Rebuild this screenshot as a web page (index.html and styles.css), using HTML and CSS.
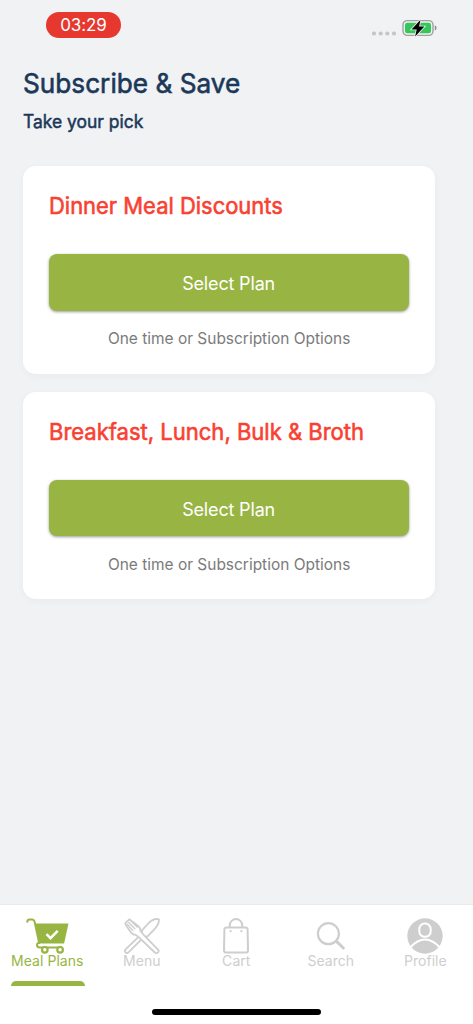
FILE: index.html
```html
<!DOCTYPE html>
<html lang="en">
<head>
<meta charset="utf-8">
<title>Subscribe &amp; Save</title>
<link rel="stylesheet" href="styles.css">
</head>
<body>
<div class="screen">
  <header class="status">
    <span class="clock">03:29</span>
    <span class="indicators">
      <svg class="signal" width="24" height="5" viewBox="0 0 24 5" fill="#c5c5c7"><circle cx="2" cy="2.5" r="2.1"/><circle cx="8.7" cy="2.5" r="2.1"/><circle cx="15.3" cy="2.5" r="2.1"/><circle cx="22" cy="2.5" r="2.1"/></svg>
      <svg class="battery" width="36" height="20" viewBox="0 0 36 20">
        <rect x="1" y="2.6" width="30" height="14.8" rx="4.3" fill="#f0f2f4" stroke="#a0a0a2" stroke-width="1.4"/>
        <rect x="3" y="4.7" width="26" height="10.6" rx="2.3" fill="#34c759"/>
        <path d="M32.8 7.3v5.1q1.8-.7 1.8-2.5t-1.8-2.6z" fill="#8c8c8e"/>
        <path d="M18.5 1.8 9.5 11.4h5.2l-1.6 7 9.3-9.9h-5.3z" fill="#000" stroke="#f0f2f4" stroke-width="1.6" paint-order="stroke"/>
      </svg>
    </span>
  </header>
  <main class="content">
    <h1 class="title">Subscribe &amp; Save</h1>
    <p class="subtitle">Take your pick</p>
    <section class="card">
      <h2 class="card-title dinner">Dinner Meal Discounts</h2>
      <button class="select">Select Plan</button>
      <p class="note">One time or Subscription Options</p>
    </section>
    <section class="card">
      <h2 class="card-title breakfast">Breakfast, Lunch, Bulk &amp; Broth</h2>
      <button class="select">Select Plan</button>
      <p class="note">One time or Subscription Options</p>
    </section>
  </main>
  <footer class="bottom">
    <nav class="tabs">
      <a class="tab active">
        <svg class="icon" width="46" height="36" viewBox="0 0 46 36" fill="none" stroke="#98b543" stroke-linecap="round" stroke-linejoin="round">
          <path d="M3.3 3.8Q3.5 1.6 5.5 1.6h2.3q2.2 0 2.8 2.2L15.2 25" stroke-width="2"/>
          <path d="M11.3 5.5h33.2l-4.4 20.1H15.6z" fill="#98b543" stroke="none"/>
          <path d="M15.5 24.5q-2.5.5-2.5 2.6 0 2.4 2.7 2.4h21.5" stroke-width="2"/>
          <circle cx="20.8" cy="31.8" r="2.8" fill="#fff" stroke-width="2.2"/>
          <circle cx="36.1" cy="31.8" r="2.8" fill="#fff" stroke-width="2.2"/>
          <path d="m22.5 16.2 4 4 7.2-7.4" stroke="#fff" stroke-width="2.5" stroke-linecap="butt" stroke-linejoin="miter"/>
        </svg>
        <span class="label">Meal Plans</span>
      </a>
      <a class="tab">
        <svg class="icon" width="36" height="36" viewBox="0 0 36 36" fill="#fff" stroke="#cecece" stroke-width="1.8" stroke-linecap="round" stroke-linejoin="round">
          <path d="M34.9 1.3C31 .2 27.7 2 24.7 5L18 12.3l-.4 3.5L1.6 31.4a2 2 0 0 0 2.9 3L20 18.8l3.5-.5 6.6-6.7c3-3 5.1-6.4 4.8-10.3z"/>
          <path d="M5.3 1.3 1.6 4.8c-.7 1 .1 2 .7 3l5 7.1c1.4 1.8 3.1 2.1 4.8 2.2l3.4 2.8 15.3 14.6a2.1 2.1 0 0 0 3.2-2.9L19.2 16.3 16.5 13c0-1.8-.4-3.5-2.1-4.8z"/>
          <path d="m7.5 3.2 5.6 5.8M4.8 4.4l6 6.3M3.3 6.2l5.5 6.4" fill="none" stroke-width="1.4"/>
        </svg>
        <span class="label">Menu</span>
      </a>
      <a class="tab">
        <svg class="icon" width="28" height="36" viewBox="0 0 28 36" fill="none" stroke="#cecece" stroke-width="2" stroke-linejoin="round">
          <path d="M4.4 9.5h19.2q1.9 0 2 2l.4 20.9q0 2.1-2.1 2.1H4.1q-2.1 0-2.1-2.1l.4-20.9q.1-2 2-2zM7.8 9.5V7.3a6.2 6.2 0 0 1 12.4 0v2.2"/>
          <g fill="#cecece" stroke="none"><circle cx="8.6" cy="13.2" r="1.1"/><circle cx="19.4" cy="13.2" r="1.1"/></g>
        </svg>
        <span class="label">Cart</span>
      </a>
      <a class="tab">
        <svg class="icon" width="30" height="36" viewBox="0 0 30 36" fill="none" stroke="#cecece">
          <circle cx="12.4" cy="15.7" r="10.5" stroke-width="2.2"/><path d="m19.9 23 2 2" stroke-width="2.2"/><path d="m21.3 24.2 6 5.8" stroke-width="3.1" stroke-linecap="round"/>
        </svg>
        <span class="label">Search</span>
      </a>
      <a class="tab">
        <svg class="icon" width="36" height="36" viewBox="0 0 36 36">
          <circle cx="18" cy="18" r="17.7" fill="#cecece"/>
          <rect x="12.3" y="5.6" width="11.4" height="13.2" rx="5.4" fill="none" stroke="#fff" stroke-width="2"/>
          <path d="M3.2 29.4Q18 13.6 32.8 29.4" fill="none" stroke="#fff" stroke-width="2.2"/>
        </svg>
        <span class="label">Profile</span>
      </a>
    </nav>
    <div class="marker"></div>
    <div class="home"></div>
  </footer>
</div>
</body>
</html>
```
FILE: styles.css
```css
* { box-sizing: border-box; }
body { margin: 0; font-family: Inter, "Liberation Sans", sans-serif; }
h1, h2, p { margin: 0; font-weight: 400; white-space: nowrap; }
.screen { width: 473px; height: 1024px; display: flex; flex-direction: column; background: #f0f2f4; overflow: hidden; }
.status { height: 60px; padding: 12px 35px 0 46px; display: flex; justify-content: space-between; align-items: flex-start; }
.clock { width: 75px; height: 26px; border-radius: 13px; background: #e6382f; color: #fff; font-size: 17px; letter-spacing: -.1px; line-height: 26px; text-align: center; }
.indicators { display: flex; gap: 6px; padding-top: 6px; }
.signal { margin-top: 13px; }
.content { flex: 1; padding: 5px 38.3px 0 22.5px; }
.title, .subtitle, .card-title { transform-origin: left center; }
.title { font-size: 27px; line-height: 37px; color: #1b3858; -webkit-text-stroke: .6px #1b3858; transform: translateY(-.2px) scaleX(.97); }
.subtitle { font-size: 18px; line-height: 26px; margin: 7px 0 31px; color: #1b3858; -webkit-text-stroke: .5px #1b3858; transform: scaleX(.97); }
.card { height: 207.7px; padding: 24px 26px 0; margin-bottom: 17.9px; border-radius: 13px; background: #fff; box-shadow: 0 2px 8px rgba(0,0,0,.035); }
.card-title { font-size: 23px; line-height: 32px; color: #f94132; -webkit-text-stroke: .6px #f94132; }
.dinner { transform: scaleX(.954); }
.breakfast { transform: scaleX(.957); }
.select { display: block; width: 100%; height: 56.4px; margin-top: 32.3px; padding: 2px 0 0; border: 0; border-radius: 8px; background: #98b543; box-shadow: 0 1px 3px rgba(0,0,0,.4); color: #fff; font: 18px Inter, sans-serif; letter-spacing: -.17px; }
.note { margin-top: 15.8px; font-size: 16px; line-height: 24px; text-align: center; color: #7b7b7b; transform: scaleX(.966); }
.bottom { height: 120px; background: #fff; border-top: 1px solid #e8eaeb; }
.tabs { display: grid; grid-template-columns: repeat(5, 1fr); height: 76px; padding: 12.5px .4px 0 0; }
.tab { display: flex; flex-direction: column; align-items: center; color: #cecece; }
.icon { display: block; }
.label { margin-top: -.5px; font-size: 14px; line-height: 16px; letter-spacing: .05px; white-space: nowrap; }
.active { color: #98b543; }
.marker { width: 74px; height: 5px; margin-left: 10.5px; border-radius: 5px 5px 0 0; background: #98b543; }
.home { width: 169px; height: 6px; margin: 23px 0 0 152px; border-radius: 3px; background: #000; }
```
